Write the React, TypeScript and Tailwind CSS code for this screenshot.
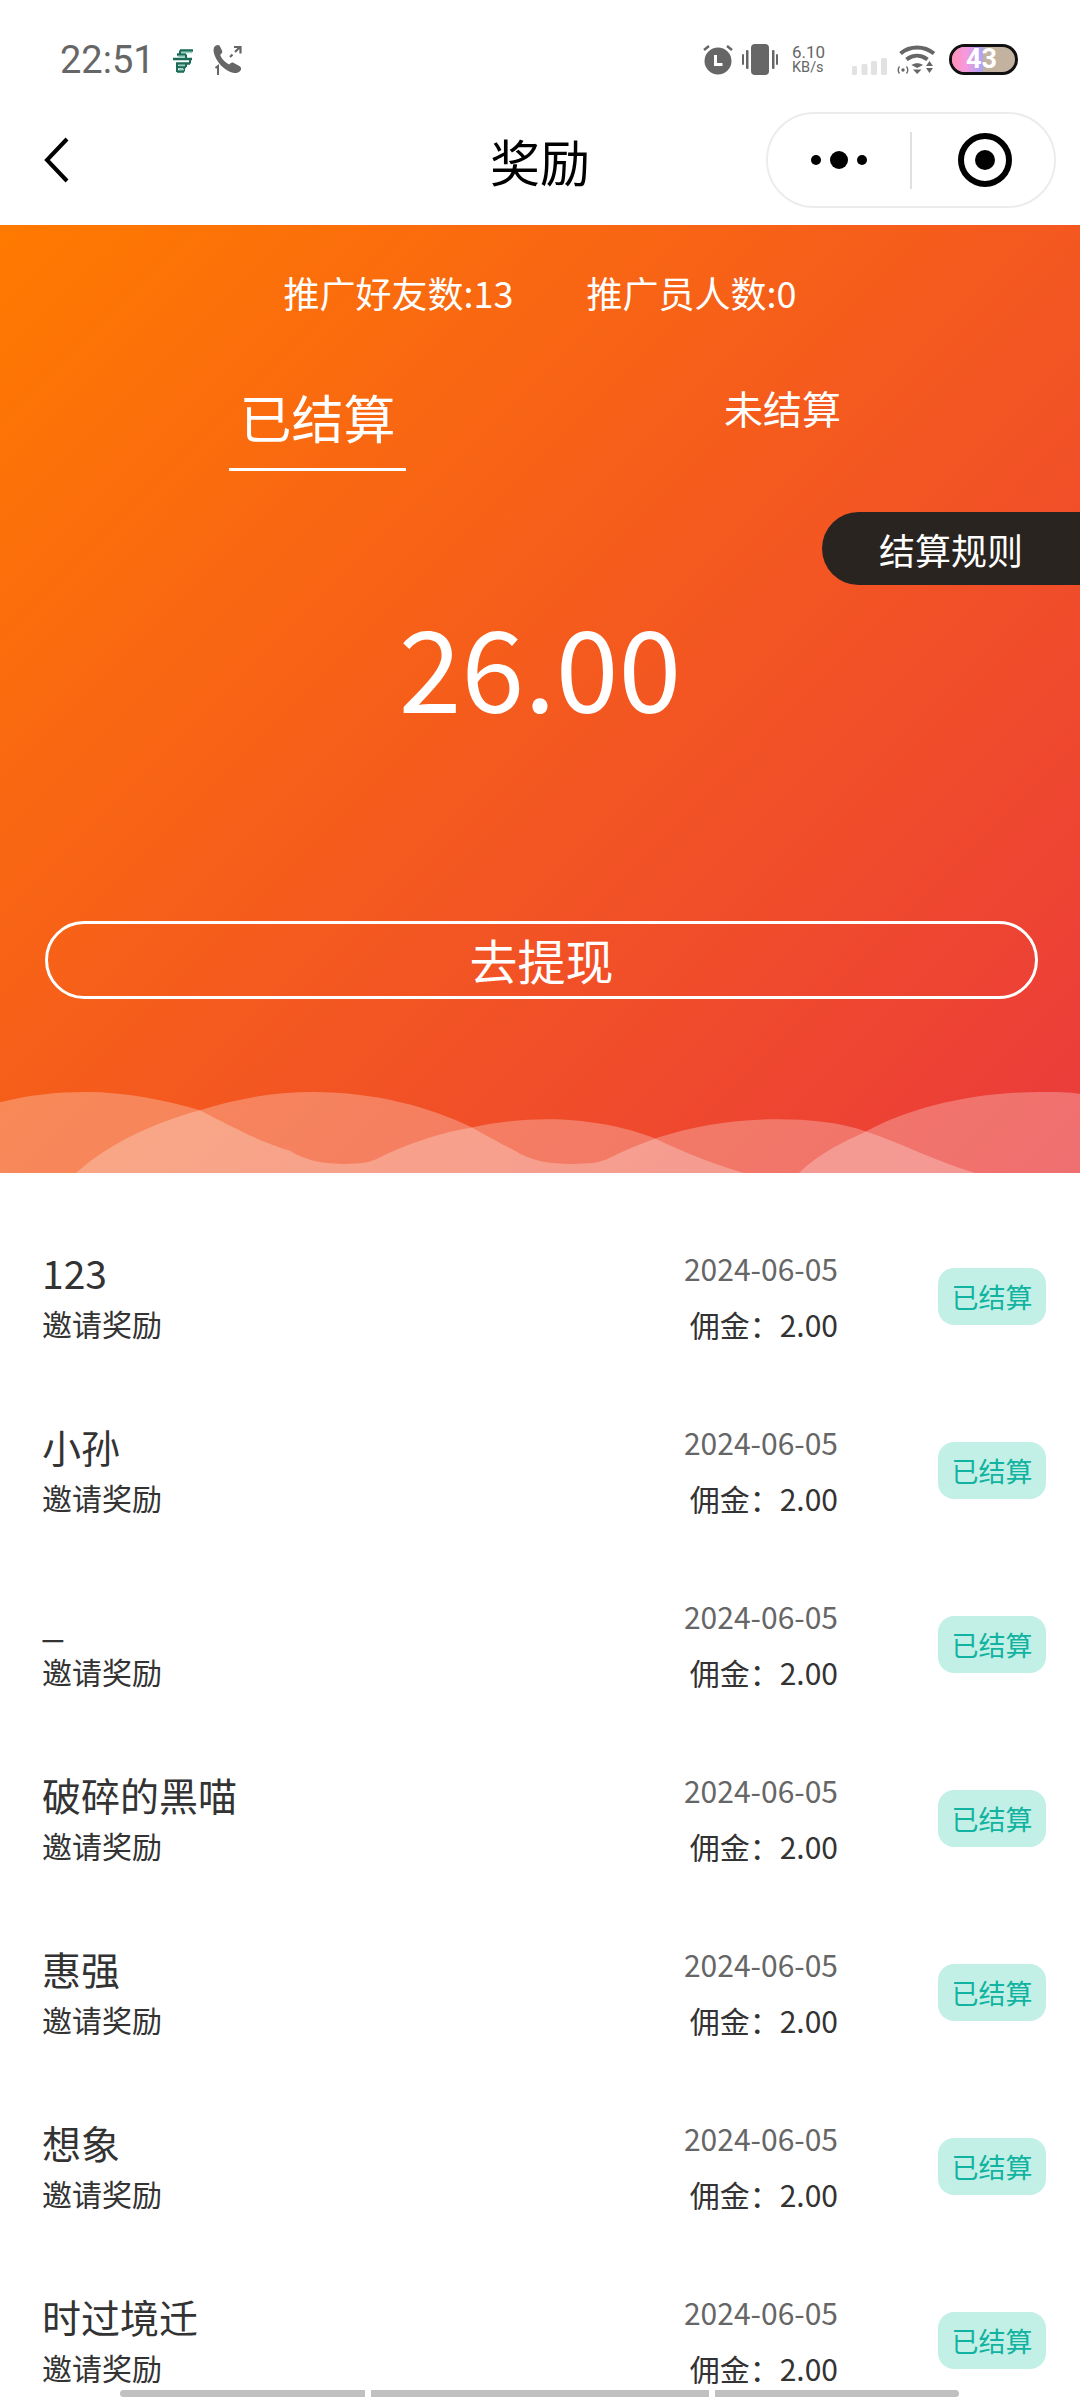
import React from 'react';

const font = { fontFamily: '"Noto Sans CJK SC", "Noto Sans", sans-serif' };

const rows = ['123', '小孙', '_', '破碎的黑喵', '惠强', '想象', '时过境迁'];

const PostLogo = () => (
  <svg width="22" height="24" viewBox="0 0 22 24" fill="none" stroke="#1b6b57" strokeWidth="2.4">
    <path d="M8 1.5h13M5 5.5h9M1 10h19M4 14.5h14M5 18h9M5 22.5h7" />
    <path d="M8 1.5v4M14 5.5V10M5 14.5V23M18 10v4.5M14 14.5V18M12 18v4.5" strokeWidth="2" />
    <path d="M9 3.5h11M6 7.5h7M7 16.5h6M7 20.5h5" stroke="#8fd0bb" strokeWidth="1.4" />
  </svg>
);

const CallIcon = () => (
  <svg width="31" height="32" viewBox="0 0 31 32">
    <path
      fill="#666"
      d="M1 3.5C2 1 5 .2 6.500 1.500L9 6.500c.6 1.300.2 2.500-.8 3.300L7.200 11c1.500 4 5 7.700 9 9.500l1.300-1.200c1-.8 2.200-1 3.300-.4l6 3.300c1.500 1 1.800 3 .6 4.500-1.500 1.700-4 2.700-6.500 2.300C11.500 27.500 2.500 17 .8 8.500.5 6.500.5 5 1 3.500z"
    />
    <path d="M17 13l2.500-2.500M22 8l5-5M21 3h6.500v6.500" fill="none" stroke="#666" strokeWidth="2.200" />
    <path d="M2.500 24l2.500-2v9" fill="none" stroke="#666" strokeWidth="2" />
  </svg>
);

const AlarmIcon = () => (
  <svg width="30" height="31" viewBox="0 0 30 31">
    <circle cx="15" cy="17" r="13.500" fill="#666" />
    <path d="M12.500 11v9.500h7" fill="none" stroke="#fff" strokeWidth="3" />
    <path d="M1 6l5-4M29 6l-5-4" fill="none" stroke="#666" strokeWidth="2.500" />
  </svg>
);

const VibrateIcon = () => (
  <svg width="36" height="31" viewBox="0 0 36 31" fill="#666">
    <rect x="9" y="0" width="18" height="31" rx="4" />
    <rect x="0" y="10" width="2" height="11" rx="1" />
    <rect x="4" y="6" width="2.500" height="19" rx="1" />
    <rect x="30" y="6" width="2.500" height="19" rx="1" />
    <rect x="34" y="10" width="2" height="11" rx="1" />
  </svg>
);

const SignalIcon = () => (
  <svg width="35" height="17" viewBox="0 0 35 17" fill="#e2e2e2">
    <rect x="0" y="8" width="5" height="9" rx="1.500" />
    <rect x="9.500" y="6" width="6" height="11" rx="1.500" />
    <rect x="19" y="3" width="6" height="14" rx="1.500" />
    <rect x="29" y="0" width="6" height="17" rx="1.500" />
  </svg>
);

const WifiIcon = () => (
  <svg width="40" height="31" viewBox="0 0 40 31">
    <path d="M3.500 9.500C13 1.500 27 1.500 37 9.500" fill="none" stroke="#666" strokeWidth="4" />
    <path d="M9.500 15.500c6.500-5 14.500-5 21 0" fill="none" stroke="#666" strokeWidth="4" />
    <path d="M14.500 21c3.500-2.500 8-2.500 11.500 0l-5.800 3z" fill="#666" />
    <path d="M16 25.500h8.500L20.200 30z" fill="#666" />
    <circle cx="6" cy="26" r="1.700" fill="#666" />
    <path d="M2.500 22.500c-1.500 2-1.500 5 0 7M9.500 22.500c1.500 2 1.500 5 0 7" fill="none" stroke="#666" strokeWidth="1.300" />
    <path d="M32.500 17l3.500 5h-7zM29 24h7l-3.500 5z" fill="#666" />
  </svg>
);

const Battery = () => (
  <div className="relative flex h-[31px] w-[69px] overflow-hidden rounded-full border-[3px] border-[#111] bg-[#c4b2a0]">
    <div className="h-full w-[31px] bg-[linear-gradient(90deg,#ff8fb4_0%,#f59ae0_45%,#a8a4f5_100%)]" />
    <span className="ml-[-17px] text-[27px] font-bold leading-[25px] text-white" style={{ fontFamily: 'Roboto, sans-serif' }}>
      43
    </span>
  </div>
);

const StatusBar = () => (
  <div className="flex h-[105px] items-start bg-white pl-[60px] pr-[62px] pt-[44px]">
    <span className="text-[38px] leading-[32px] text-[#666]" style={{ fontFamily: 'Roboto, sans-serif' }}>
      22:51
    </span>
    <div className="ml-[17px] mt-[5px]">
      <PostLogo />
    </div>
    <div className="ml-[19px]">
      <CallIcon />
    </div>
    <div className="ml-auto flex items-start">
      <AlarmIcon />
      <div className="ml-[9px]">
        <VibrateIcon />
      </div>
      <div
        className="ml-[14px] flex w-[35px] flex-col items-start text-[#666]"
        style={{ fontFamily: 'Roboto, sans-serif' }}
      >
        <span className="text-[17px] leading-[17px]">6.10</span>
        <span className="text-[14.500px] leading-[14px]">KB/s</span>
      </div>
      <div className="ml-[25px] mt-[14px]">
        <SignalIcon />
      </div>
      <div className="ml-[10px]">
        <WifiIcon />
      </div>
      <div className="ml-[12px]">
        <Battery />
      </div>
    </div>
  </div>
);

const NavBar = () => (
  <div className="relative flex h-[120px] items-center justify-center bg-white">
    <svg className="absolute left-[43px] top-[31px]" width="28" height="48" viewBox="0 0 28 48" fill="none">
      <path d="M24 3L4 24l20 21" stroke="#000" strokeWidth="4" />
    </svg>
    <span className="mb-[10px] text-[50px] leading-[60px] text-black">奖励</span>
    <div className="absolute left-[766px] top-[7px] flex h-[96px] w-[290px] items-center rounded-full border-2 border-[#ececec] bg-white">
      <div className="flex w-[142px] items-center justify-center gap-[9px]">
        <span className="h-[10px] w-[10px] rounded-full bg-black" />
        <span className="h-[18px] w-[18px] rounded-full bg-black" />
        <span className="h-[10px] w-[10px] rounded-full bg-black" />
      </div>
      <div className="h-[57px] w-[2px] bg-[#e0e0e0]" />
      <div className="flex flex-1 items-center justify-center pl-[3px]">
        <div className="flex h-[54px] w-[54px] items-center justify-center rounded-full border-[6px] border-black">
          <span className="h-[20px] w-[20px] rounded-full bg-black" />
        </div>
      </div>
    </div>
  </div>
);

const Waves = () => (
  <svg className="absolute bottom-0 left-0" width="1080" height="81" viewBox="0 0 1080 80" preserveAspectRatio="none">
    <path
      fill="#fff"
      fillOpacity="0.27"
      d="M0 10C30 3 55 0 86 0C125 0 165 8 200 18C235 36 262 50 290 58C305 68 325 71 345 71C360 71 370 70 379 65C405 52 440 40 472 35C495 30 520 27 548 27C585 27 625 34 655 46C685 60 715 72 744 80L799 80C820 60 842 50 866 39C910 15 975 0 1040 0C1055 0 1070 0 1080 2L1080 80L0 80Z"
    />
    <path
      fill="#fff"
      fillOpacity="0.27"
      d="M76 80C110 50 155 30 200 18C235 7 272 0 313 0C375 0 430 15 472 35C490 45 503 52 515 58C530 68 550 71 572 71C590 71 600 70 610 65C625 57 640 52 655 46C695 33 735 27 778 27C810 27 840 30 866 39C900 50 935 68 975 80Z"
    />
  </svg>
);

const Hero = () => (
  <div className="relative flex h-[948px] flex-col overflow-hidden bg-[linear-gradient(135deg,#ff7a00_0%,#ea3a3c_100%)] text-white">
    <div className="mt-[44px] flex justify-center gap-[73px] text-[36px] leading-[46px]">
      <span>推广好友数:13</span>
      <span>推广员人数:0</span>
    </div>
    <div className="mt-[67px] flex pl-[85px]">
      <div className="flex w-[465px] flex-col items-center">
        <span className="h-[70px] text-[52px] leading-[70px]">已结算</span>
        <div className="mt-[16px] h-[3px] w-[177px] bg-white" />
      </div>
      <div className="mt-[-5px] w-[465px] text-center">
        <span className="text-[39px] leading-[60px]">未结算</span>
      </div>
    </div>
    <div className="absolute right-0 top-[287px] flex h-[73px] w-[258px] items-center justify-center rounded-l-full bg-[#2a2420] text-[36px]">
      结算规则
    </div>
    <div className="mt-[128px] text-center text-[113px] leading-[130px]">26.00</div>
    <div className="ml-[45px] mr-[42px] mt-[192px] flex h-[78px] items-center justify-center rounded-full border-[3px] border-white pb-[3px] text-[48px]">
      去提现
    </div>
    <Waves />
  </div>
);

const Row = ({ name }: { name: string }) => (
  <div className="flex h-[114px] shrink-0 items-center pl-[42px] pr-[34px]">
    <div className="flex-1">
      <div className="h-[50px] text-[39px] leading-[52px] text-[#333]">{name}</div>
      <div className="mt-[4px] h-[46px] text-[30px] leading-[46px] text-[#333]">邀请奖励</div>
    </div>
    <div className="mr-[100px] flex flex-col items-end">
      <div className="h-[46px] text-[30px] leading-[44px] text-[#666]">2024-06-05</div>
      <div className="mt-[9px] h-[46px] text-[30px] leading-[46px] text-[#333]">佣金：2.00</div>
    </div>
    <div className="flex h-[57px] w-[108px] items-center justify-center rounded-[16px] bg-[#c3f0e6] pt-[2px] text-[27px] text-[#12b3a0]">
      已结算
    </div>
  </div>
);

export default function App() {
  return (
    <div className="relative flex h-[2400px] w-[1080px] flex-col overflow-hidden bg-white" style={font}>
      <StatusBar />
      <NavBar />
      <Hero />
      <div className="flex flex-col gap-[60px] bg-white pt-[66px]">
        {rows.map((name, i) => (
          <Row key={i} name={name} />
        ))}
      </div>
      <div className="absolute bottom-[3px] left-[120px] flex h-[7px] gap-[6px]">
        <div className="w-[245px] rounded-l-full bg-[#c0c0c0]" />
        <div className="w-[338px] bg-[#c0c0c0]" />
        <div className="w-[244px] rounded-r-full bg-[#c0c0c0]" />
      </div>
    </div>
  );
}
